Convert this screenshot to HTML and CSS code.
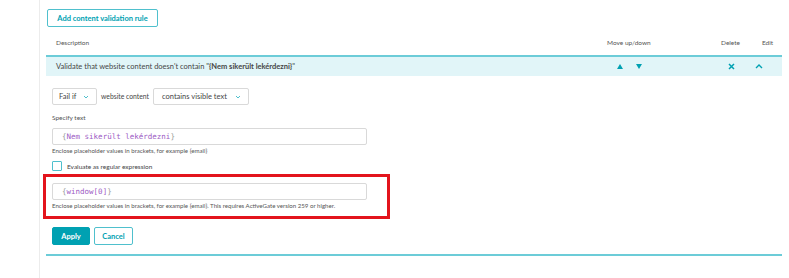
FILE: index.html
```html
<!doctype html>
<html lang="en">

<head>
  <meta charset="UTF-8" />
  <meta name="viewport" content="width=device-width, initial-scale=1" />
  <title>Content validation rules</title>
  <link rel="stylesheet" href="styles.css">
</head>

<body>
  <div class="page">
    <button class="btn btn-outline add-rule">Add content validation rule</button>

    <div class="rules">
      <div class="rules-head">
        <span class="col-desc">Description</span>
        <span class="col-move">Move up/down</span>
        <span class="col-delete">Delete</span>
        <span class="col-edit">Edit</span>
      </div>

      <div class="rule-row">
        <span class="col-desc">Validate that website content doesn't contain "<b>{Nem sikerült lekérdezni}</b>"</span>
        <span class="col-move">
          <svg class="icon tri" viewBox="0 0 6 5"><path d="M3 0 L6 5 L0 5 Z" /></svg>
          <svg class="icon tri" viewBox="0 0 6 5"><path d="M0 0 L6 0 L3 5 Z" /></svg>
        </span>
        <span class="col-delete">
          <svg class="icon cross" viewBox="0 0 7 7"><path d="M1 1 L6 6 M6 1 L1 6" /></svg>
        </span>
        <span class="col-edit">
          <svg class="icon chevron" viewBox="0 0 8 5"><path d="M1 4 L4 1 L7 4" /></svg>
        </span>
      </div>

      <!-- Edit form of the expanded rule -->
      <div class="rule-form">
        <div class="condition">
          <div class="select select-short">
            <span>Fail if</span>
            <svg class="caret" viewBox="0 0 6 4"><path d="M1 1 L3 3 L5 1" /></svg>
          </div>
          <span class="condition-label">website content</span>
          <div class="select select-long">
            <span>contains visible text</span>
            <svg class="caret" viewBox="0 0 6 4"><path d="M1 1 L3 3 L5 1" /></svg>
          </div>
        </div>

        <div class="field-label">Specify text</div>
        <div class="text-input"><span class="brace">{</span><span class="value">Nem sikerült lekérdezni</span><span class="brace">}</span></div>
        <div class="hint">Enclose placeholder values in brackets, for example {email}</div>

        <label class="checkbox-row">
          <span class="checkbox"></span>
          <span>Evaluate as regular expression</span>
        </label>

        <div class="highlight">
          <div class="text-input"><span class="brace">{</span><span class="value">window[0]</span><span class="brace">}</span></div>
          <div class="hint">Enclose placeholder values in brackets, for example {email}. This requires ActiveGate version 259 or higher.</div>
        </div>

        <div class="actions">
          <button class="btn btn-primary">Apply</button>
          <button class="btn btn-outline">Cancel</button>
        </div>
      </div>
    </div>
  </div>
</body>

</html>
```

FILE: styles.css
```css
body {
  margin: 0;
  background-color: white;
  font-family: Lato, "Open Sans", sans-serif;
  color: #454646;
}

.page {
  margin-left: 39px;
  border-left: 1px solid #ececec;
  min-height: 100vh;
  padding: 9px 7px 0 6px;
  box-sizing: border-box;
}

.btn {
  font-family: Lato, "Open Sans", sans-serif;
  font-size: 7.5px;
  font-weight: bold;
  height: 18px;
  padding: 0 7px;
  border-radius: 2px;
  cursor: pointer;
  box-sizing: border-box;
}

.btn-outline {
  background-color: white;
  border: 1px solid #4fc0cd;
  color: #00a1b2;
}

.btn-primary {
  background-color: #00a1b2;
  border: 1px solid #00a1b2;
  color: white;
}

.add-rule {
  display: block;
  margin-left: 1px;
  width: 111px;
}

.rules-head,
.rule-row {
  display: grid;
  grid-template-columns: 1fr 114px 41px 20px;
  align-items: center;
}

.rules-head {
  font-size: 6.5px;
  color: #555;
  padding: 11px 0 7px;
  line-height: 10px;
  border-bottom: 2px solid #6cccd8;
}

.col-desc {
  padding-left: 10px;
}

.rule-row {
  height: 19px;
  background-color: #e1f5f8;
  font-size: 7.5px;
  color: #454646;
}

.rule-row b {
  font-weight: bold;
}

.rule-row .col-move {
  display: flex;
  gap: 13px;
  padding-left: 10px;
}

.icon {
  display: block;
}

.tri {
  width: 6px;
  height: 5px;
  fill: #00a1b2;
}

.cross {
  width: 7px;
  height: 7px;
  margin-left: 7px;
  stroke: #00a1b2;
  stroke-width: 1.5;
  fill: none;
}

.chevron {
  width: 8px;
  height: 5px;
  margin-left: -7px;
  stroke: #00a1b2;
  stroke-width: 1.4;
  fill: none;
}

.rule-form {
  padding: 12px 0 9px 6px;
  border-bottom: 2px solid #6cccd8;
}

.condition {
  display: flex;
  align-items: center;
  gap: 4px;
}

.select {
  display: flex;
  align-items: center;
  justify-content: space-between;
  height: 17px;
  padding: 0 7px 0 6px;
  border: 1px solid #d9d9d9;
  border-radius: 2px;
  box-sizing: border-box;
  font-size: 7.5px;
}

.select-short {
  width: 45px;
}

.select-long {
  width: 96px;
  padding-left: 8px;
}

.caret {
  width: 6px;
  height: 4px;
  stroke: #4fc0cd;
  stroke-width: 1;
  fill: none;
}

.condition-label {
  font-size: 6.8px;
  margin-top: -2px;
}

.field-label {
  font-size: 6.5px;
  line-height: 10px;
  margin-top: 8px;
  color: #555;
}

.text-input {
  width: 315px;
  height: 17px;
  margin-top: 5px;
  padding-left: 9px;
  border: 1px solid #d9d9d9;
  border-radius: 2px;
  box-sizing: border-box;
  display: flex;
  align-items: center;
  font-family: "DejaVu Sans Mono", monospace;
  font-size: 7.5px;
}

.text-input .brace {
  color: #9a9a9a;
}

.text-input .value {
  color: #9d5bc4;
}

.hint {
  font-size: 6.1px;
  line-height: 8px;
  margin-top: 2px;
  color: #555;
}

.checkbox-row {
  display: flex;
  align-items: center;
  gap: 5px;
  margin-top: 6px;
  font-size: 6.5px;
}

.checkbox {
  width: 10px;
  height: 10px;
  border: 1px solid #4fc0cd;
  border-radius: 1px;
  box-sizing: border-box;
}

.highlight {
  width: 347px;
  margin: 3px 0 0 -9px;
  padding: 6px 0 6px 6px;
  border: 3px solid #e3141c;
  box-sizing: border-box;
}

.highlight .text-input {
  margin-top: 0;
}

.actions {
  display: flex;
  gap: 4px;
  margin-top: 8px;
}

.actions .btn {
  width: 38px;
  padding: 0;
}

.actions .btn-outline {
  width: 39px;
}
```
